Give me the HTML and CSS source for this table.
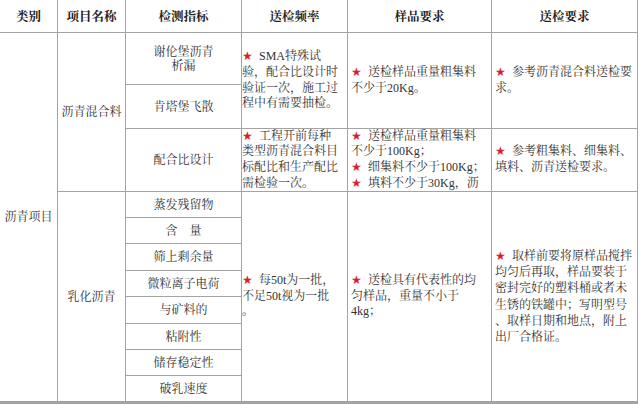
FILE: index.html
```html
<!DOCTYPE html>
<html lang="zh-CN">
<head>
<meta charset="utf-8">
<title>沥青项目送检要求</title>
<link rel="stylesheet" href="styles.css">
</head>
<body>
<div class="sheet">
  <div class="cell head">类别</div>
  <div class="cell head">项目名称</div>
  <div class="cell head">检测指标</div>
  <div class="cell head">送检频率</div>
  <div class="cell head">样品要求</div>
  <div class="cell head">送检要求</div>

  <div class="cell center span-11">沥青项目</div>
  <div class="cell center span-3">沥青混合料</div>
  <div class="cell center item">谢伦堡沥青<br>析漏</div>
  <div class="cell note freq span-2"><p><span class="star">★</span>SMA特殊试<br>验，配合比设计时<br>验证一次，施工过<br>程中有需要抽检。</p></div>
  <div class="cell note span-2"><p><span class="star">★</span>送检样品重量粗集料<br>不少于20Kg。</p></div>
  <div class="cell note span-2"><p><span class="star">★</span>参考沥青混合料送检要<br>求。</p></div>

  <div class="cell center item">肯塔堡飞散</div>

  <div class="cell center item">配合比设计</div>
  <div class="cell note freq"><p><span class="star">★</span>工程开前每种<br>类型沥青混合料目<br>标配比和生产配比<br>需检验一次。</p></div>
  <div class="cell note"><p><span class="star">★</span>送检样品重量粗集料<br>不少于100Kg；<br><span class="star">★</span>细集料不少于100Kg；<br><span class="star">★</span>填料不少于30Kg，沥</p></div>
  <div class="cell note"><p><span class="star">★</span>参考粗集料、细集料、<br>填料、沥青送检要求。</p></div>

  <div class="cell center span-8">乳化沥青</div>
  <div class="cell center item">蒸发残留物</div>
  <div class="cell note freq span-8"><p><span class="star">★</span>每50t为一批，<br>不足50t视为一批<br>。</p></div>
  <div class="cell note span-8"><p><span class="star">★</span>送检具有代表性的均<br>匀样品，重量不小于<br>4kg；</p></div>
  <div class="cell note span-8 long"><p><span class="star">★</span>取样前要将原样品搅拌<br>均匀后再取，样品要装于<br>密封完好的塑料桶或者未<br>生锈的铁罐中；写明型号<br>、取样日期和地点，附上<br>出厂合格证。</p></div>

  <div class="cell center item">含　量</div>
  <div class="cell center item">筛上剩余量</div>
  <div class="cell center item">微粒离子电荷</div>
  <div class="cell center item">与矿料的</div>
  <div class="cell center item">粘附性</div>
  <div class="cell center item">储存稳定性</div>
  <div class="cell center item">破乳速度</div>
</div>
</body>
</html>
```

FILE: styles.css
```css
html, body {
  margin: 0;
  padding: 0;
  background: #ffffff;
}

body {
  font-family: "Liberation Serif", "Noto Serif CJK SC", "Noto Sans CJK SC", serif;
  font-size: 12px;
  color: #333333;
}

.sheet {
  display: grid;
  width: max-content;
  grid-template-columns: 57px 67px 115px 105px 143px 145px;
  grid-template-rows: 32px 51px 43px 62px 25px 25px 26px 25px 26px 25px 25px 25px;
  gap: 1px;
  padding: 0 1px 3px 0;
  background: #a3a3a3;
}

.cell {
  background: #ffffff;
  display: flex;
  align-items: center;
  overflow: hidden;
  white-space: nowrap;
}

.head {
  justify-content: center;
  font-weight: bold;
  color: #222222;
  font-size: 12.5px;
}

.center {
  justify-content: center;
  text-align: center;
  line-height: 14px;
}

.span-2 { grid-row: span 2; }
.span-3 { grid-row: span 3; }
.span-8 { grid-row: span 8; }
.span-11 { grid-row: span 11; }

.note {
  padding: 0 2px 0 3px;
  line-height: 15.6px;
}

.note p {
  margin: 0;
}

.freq {
  padding-left: 0;
}

.long {
  line-height: 16.2px;
}

.star {
  display: inline-block;
  width: 17px;
  color: #d81f2a;
  font-family: "DejaVu Sans", sans-serif;
  font-size: 12px;
}
```
